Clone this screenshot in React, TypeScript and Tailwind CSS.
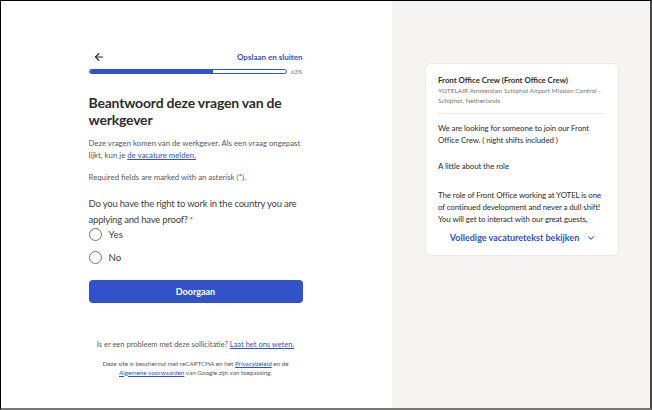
import React from 'react';
import { ArrowLeft, ChevronDown } from 'lucide-react';

export default function App() {
    return (
        <div className="w-[652px] h-[410px] overflow-hidden border-l border-t border-black border-r-2 border-b-2 border-r-[#444] border-b-[#777] flex font-['Lato',sans-serif] text-[#2d2d2d]">
            {/* Formulier */}
            <div className="w-[391px] bg-white flex justify-center">
                <div className="w-[214px] pt-[48px] ml-[-2px]">
                    <div className="flex items-center justify-between h-[16px]">
                        <ArrowLeft size={12} strokeWidth={2.2} className="ml-[4px] text-[#2d2d2d]" />
                        <a className="text-[8px] font-bold text-[#3152c8]">Opslaan en sluiten</a>
                    </div>
                    <div className="flex items-center gap-[4px] mt-[2px]">
                        <div className="flex-1 h-[5px] rounded-full border border-[#3152c8] overflow-hidden">
                            <div className="h-full w-[63%] bg-[#3152c8]" />
                        </div>
                        <span className="text-[6px] text-[#767676]">63%</span>
                    </div>

                    <h1 className="mt-[18px] text-[14px] font-bold leading-[17px] tracking-[-0.2px] text-[#2d2d2d]">
                        Beantwoord deze vragen van de werkgever
                    </h1>

                    <p className="mt-[9px] text-[7.8px] leading-[12px] text-[#595959]">
                        Deze vragen komen van de werkgever. Als een vraag ongepast lijkt, kun je{' '}
                        <a className="text-[#3152c8] underline">de vacature melden.</a>
                    </p>
                    <p className="mt-[10px] text-[7.8px] leading-[12px] text-[#595959]">
                        Required fields are marked with an asterisk (<span className="text-[#c0273b]">*</span>).
                    </p>

                    <p className="mt-[13px] text-[9.5px] leading-[16px] tracking-[-0.2px] text-[#424242]">
                        Do you have the right to work in the country you are applying and have proof?<span className="text-[#c0273b] text-[8px]"> *</span>
                    </p>

                    <div className="mt-0 flex flex-col gap-[10px]">
                        {['Yes', 'No'].map(o => (
                            <label key={o} className="flex items-center gap-[7px] h-[13px]">
                                <span className="w-[13px] h-[13px] rounded-full border border-[#767676] bg-white" />
                                <span className="text-[9.8px] leading-[13px] text-[#424242]">{o}</span>
                            </label>
                        ))}
                    </div>

                    <button className="mt-[16px] w-full h-[23px] rounded-[4px] bg-[#3152c8] text-white text-[9px] font-bold">
                        Doorgaan
                    </button>

                    <p className="mt-[36px] text-center text-[7.5px] leading-[11px] text-[#595959] whitespace-nowrap">
                        Is er een probleem met deze sollicitatie? <a className="text-[#3152c8] underline">Laat het ons weten.</a>
                    </p>
                    <p className="mt-[10px] text-center text-[6.3px] leading-[8.5px] text-[#595959] px-[4px]">
                        Deze site is beschermd met reCAPTCHA en het <a className="text-[#3152c8] underline">Privacybeleid</a> en de{' '}
                        <a className="text-[#3152c8] underline">Algemene voorwaarden</a> van Google zijn van toepassing.
                    </p>
                </div>
            </div>

            {/* Vacature */}
            <div className="flex-1 bg-[#f5f4f2] pt-[62px] pl-[33px] pr-[30px]">
                <div className="w-[194px] bg-white rounded-[6px] border border-[#ebe9e6] pl-[12px] pr-[10px] pt-[10px] pb-[10px]">
                    <div className="text-[7.8px] font-bold leading-[12px]">Front Office Crew (Front Office Crew)</div>
                    <div className="text-[6.5px] leading-[10px] text-[#767676]">
                        YOTELAIR Amsterdam Schiphol Airport Mission Control - Schiphol, Netherlands
                    </div>
                    <div className="h-px bg-[#ebe9e6] mt-[7px] mr-[2px]" />
                    <div className="h-[101px] overflow-hidden text-[7.9px] leading-[12px] tracking-[-0.1px] mt-[8px]">
                        <p>We are looking for someone to join our Front Office Crew. ( night shifts included )</p>
                        <p className="mt-[14px]">A little about the role</p>
                        <p className="mt-[17px]">
                            The role of Front Office working at YOTEL is one of continued development and never a dull shift! You will get to interact with our great guests, making sure every stay is a pleasant one.
                        </p>
                    </div>
                    <div className="flex items-center justify-center gap-[7px] mt-[8px] text-[#3152c8]">
                        <span className="text-[9px] font-bold">Volledige vacaturetekst bekijken</span>
                        <ChevronDown size={10} strokeWidth={2.5} />
                    </div>
                </div>
            </div>
        </div>
    );
}
